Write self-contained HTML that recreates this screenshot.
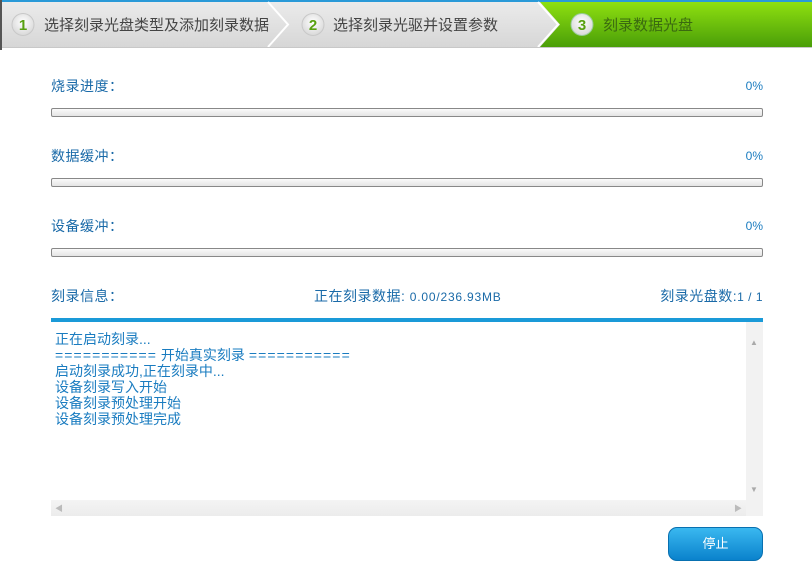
<!DOCTYPE html>
<html><head><meta charset="utf-8"><style>
*{margin:0;padding:0;box-sizing:border-box}
body{width:812px;height:564px;background:#fff;position:relative;overflow:hidden;font-family:"Liberation Sans","Noto Sans CJK SC",sans-serif;font-size:13px}
.a{position:absolute}
.lbl{color:#1a6aa8;font-size:14px;letter-spacing:0.5px}
.pct{color:#1a7cc0;font-size:12px}
.bar{position:absolute;left:51px;width:712px;height:9px;border:1px solid #888;border-radius:2px;background:linear-gradient(#fafafa,#e4e4e4)}
.log{color:#1a7cc0;font-size:14px;line-height:16px}
.eq{letter-spacing:1.1px}
</style></head><body>
<svg class="a" style="left:0;top:0" width="812" height="50">
<defs>
<linearGradient id="g" x1="0" y1="0" x2="0" y2="1"><stop offset="0" stop-color="#ececec"/><stop offset="1" stop-color="#d6d6d6"/></linearGradient>
<linearGradient id="gr" x1="0" y1="0" x2="0" y2="1"><stop offset="0" stop-color="#8fe010"/><stop offset="1" stop-color="#4a9e08"/></linearGradient>
<radialGradient id="c" cx="0.5" cy="0.4" r="0.6"><stop offset="0" stop-color="#fff"/><stop offset="1" stop-color="#d8d8d8"/></radialGradient>
</defs>
<rect x="0" y="0" width="812" height="48" fill="url(#g)"/>
<rect x="0" y="0" width="812" height="2" fill="#2a9ad8"/>
<polygon points="540,2 812,2 812,47 540,47 560,24.5" fill="url(#gr)"/>
<polyline points="268,2 288,24.5 268,47" fill="none" stroke="#fff" stroke-width="2"/>
<polyline points="538,2 558,24.5 538,47" fill="none" stroke="#fff" stroke-width="2"/>
<rect x="0" y="47" width="812" height="1" fill="#c8c8c8"/>
<rect x="0" y="0" width="2" height="564" fill="#555"/>
<circle cx="23" cy="24.5" r="11" fill="url(#c)" stroke="#c8c8c8"/>
<circle cx="313" cy="24.5" r="11" fill="url(#c)" stroke="#c8c8c8"/>
<circle cx="582" cy="24.5" r="11" fill="url(#c)" stroke="#9c9"/>
<text x="23" y="30" text-anchor="middle" font-family="Liberation Sans" font-weight="bold" font-size="15" fill="#58a010">1</text>
<text x="313" y="30" text-anchor="middle" font-family="Liberation Sans" font-weight="bold" font-size="15" fill="#58a010">2</text>
<text x="582" y="30" text-anchor="middle" font-family="Liberation Sans" font-weight="bold" font-size="15" fill="#58a010">3</text>
<text x="44" y="30" font-family="Liberation Sans,Noto Sans CJK SC,sans-serif" font-size="15" fill="#444">选择刻录光盘类型及添加刻录数据</text>
<text x="333" y="30" font-family="Liberation Sans,Noto Sans CJK SC,sans-serif" font-size="15" fill="#444">选择刻录光驱并设置参数</text>
<text x="603" y="30" font-family="Liberation Sans,Noto Sans CJK SC,sans-serif" font-size="15" fill="#3a6a10">刻录数据光盘</text>
</svg>
<div class="a lbl" style="left:51px;top:76px">烧录进度：</div><div class="a pct" style="right:49px;top:79px">0%</div>
<div class="bar" style="top:108px"></div>
<div class="a lbl" style="left:51px;top:146px">数据缓冲：</div><div class="a pct" style="right:49px;top:149px">0%</div>
<div class="bar" style="top:178px"></div>
<div class="a lbl" style="left:51px;top:216px">设备缓冲：</div><div class="a pct" style="right:49px;top:219px">0%</div>
<div class="bar" style="top:248px"></div>
<div class="a lbl" style="left:51px;top:286px">刻录信息：</div>
<div class="a lbl" style="left:314px;top:286px">正在刻录数据: <span style="font-size:12px;letter-spacing:0.8px">0.00/236.93MB</span></div>
<div class="a lbl" style="right:49px;top:286px">刻录光盘数:<span style="font-size:12px;letter-spacing:0.5px">1 / 1</span></div>
<div class="a" style="left:51px;top:318px;width:712px;height:4px;background:#1a9ad8"></div>
<div class="a" style="left:51px;top:322px;width:712px;height:194px;background:#fff">
<div class="a log" style="left:4px;top:9px">正在启动刻录...<br><span class="eq">===========</span> 开始真实刻录 <span class="eq">===========</span><br>启动刻录成功,正在刻录中...<br>设备刻录写入开始<br>设备刻录预处理开始<br>设备刻录预处理完成</div>
<div class="a" style="left:695px;top:0;width:17px;height:194px;background:#f2f2f2"></div>
<div class="a" style="left:0;top:178px;width:695px;height:16px;background:linear-gradient(#f4f4f4,#ececec)"></div>
<div class="a" style="left:699px;top:16px;color:#aaa;font-size:8px">▲</div>
<div class="a" style="left:699px;top:163px;color:#aaa;font-size:8px">▼</div>
<div class="a" style="left:4px;top:181px;color:#bbb;font-size:8px">◀</div>
<div class="a" style="left:683px;top:181px;color:#bbb;font-size:8px">▶</div>
</div>
<div class="a" style="left:668px;top:527px;width:95px;height:34px;border-radius:9px;background:linear-gradient(#3ab8f0,#0a82cc);border:1px solid #0870b0;color:#fff;font-size:13px;text-align:center;line-height:32px">停止</div>
</body></html>
